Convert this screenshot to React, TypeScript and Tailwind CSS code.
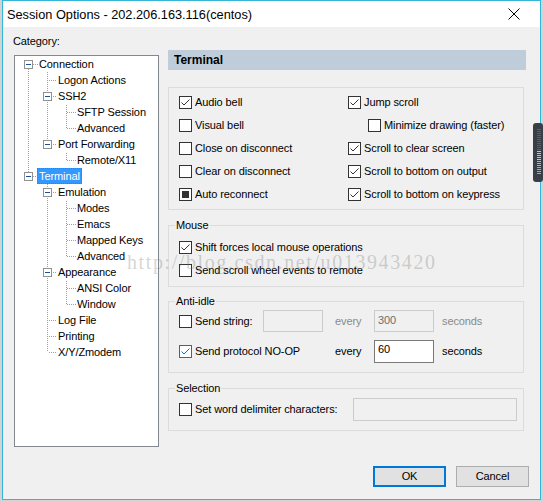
import React from "react";

type Node = { level: number; label: string; exp?: boolean; selected?: boolean };

const tree: Node[] = [
  { level: 0, label: "Connection", exp: true },
  { level: 1, label: "Logon Actions" },
  { level: 1, label: "SSH2", exp: true },
  { level: 2, label: "SFTP Session" },
  { level: 2, label: "Advanced" },
  { level: 1, label: "Port Forwarding", exp: true },
  { level: 2, label: "Remote/X11" },
  { level: 0, label: "Terminal", exp: true, selected: true },
  { level: 1, label: "Emulation", exp: true },
  { level: 2, label: "Modes" },
  { level: 2, label: "Emacs" },
  { level: 2, label: "Mapped Keys" },
  { level: 2, label: "Advanced" },
  { level: 1, label: "Appearance", exp: true },
  { level: 2, label: "ANSI Color" },
  { level: 2, label: "Window" },
  { level: 1, label: "Log File" },
  { level: 1, label: "Printing" },
  { level: 1, label: "X/Y/Zmodem" },
];

const hasNext = (i: number) => {
  const L = tree[i].level;
  for (let j = i + 1; j < tree.length; j++) {
    if (tree[j].level < L) return false;
    if (tree[j].level === L) return true;
  }
  return false;
};

const ancestorAt = (i: number, A: number) => {
  for (let j = i - 1; j >= 0; j--) if (tree[j].level === A) return j;
  return -1;
};

// dotted connector lines + expander boxes of the tree view
const TreeLines = () => {
  const dots: string[] = [];
  const vert = (x: number, y1: number, y2: number) => {
    for (let y = y1; y < y2; y++) if ((x + y) % 2 === 0) dots.push(`M${x} ${y}h1v1h-1z`);
  };
  const horiz = (y: number, x1: number, x2: number) => {
    for (let x = x1; x < x2; x++) if ((x + y) % 2 === 0) dots.push(`M${x} ${y}h1v1h-1z`);
  };
  const boxes: React.ReactElement[] = [];
  tree.forEach((n, i) => {
    const xc = 13 + 19 * n.level;
    const top = 16 * i;
    const yc = top + 8;
    if (i > 0) vert(xc, top, yc);
    if (hasNext(i)) vert(xc, yc, top + 16);
    for (let A = 0; A < n.level; A++) {
      const j = ancestorAt(i, A);
      if (j >= 0 && hasNext(j)) vert(13 + 19 * A, top, top + 16);
    }
    horiz(yc, n.exp ? xc + 5 : xc + 1, xc + 10);
    if (n.exp)
      boxes.push(
        <g key={i}>
          <rect x={xc - 3.5} y={yc - 3.5} width={8} height={8} fill="#ffffff" stroke="#919191" />
          <rect x={xc - 2} y={yc} width={5} height={1} fill="#1c4e9c" />
        </g>
      );
  });
  return (
    <svg className="absolute left-0 top-0" width="143" height="390" shapeRendering="crispEdges">
      <path d={dots.join("")} fill="#a0a0a0" />
      {boxes}
    </svg>
  );
};

const Check = ({ state, blue }: { state: "on" | "off" | "mixed"; blue?: boolean }) => (
  <span
    className={
      blue
        ? "relative flex w-[13px] h-[13px] shrink-0 items-center justify-center border border-[#0078d7] bg-white"
        : "relative flex w-[13px] h-[13px] shrink-0 items-center justify-center border border-[#333333] bg-white"
    }
  >
    {state === "on" && (
      <svg width="11" height="11" viewBox="0 0 11 11" className="block">
        <path d="M1.5 5.5 L4 8 L9.5 2.5" fill="none" stroke={blue ? "#0078d7" : "#333333"} strokeWidth="1" />
      </svg>
    )}
    {state === "mixed" && <span className="w-[7px] h-[7px] bg-[#333333]" />}
  </span>
);

const Option = ({
  label,
  state = "off",
  blue,
  className = "",
}: {
  label: string;
  state?: "on" | "off" | "mixed";
  blue?: boolean;
  className?: string;
}) => (
  <div className={`flex items-center gap-[3px] whitespace-nowrap ${className}`}>
    <Check state={state} blue={blue} />
    <span>{label}</span>
  </div>
);

const Group = ({ title, children }: { title: string; children: React.ReactNode }) => (
  <fieldset className="w-[356px] border border-[#dcdcdc] p-0 m-0">
    <legend className="ml-[6px] px-[1px] leading-[16px]">{title}</legend>
    {children}
  </fieldset>
);

export default function App() {
  return (
    <div className="relative w-[543px] h-[502px] overflow-hidden bg-[#d3d3d3] font-['Liberation_Sans',Arial,sans-serif] text-[11px] leading-[15px] tracking-[-0.1px] text-black">
      <div className="ml-[2px] w-[539px] h-[500px] border border-[#35b5d8] bg-[#f0f0f0] flex flex-col">
        {/* title bar */}
        <div className="h-[26px] shrink-0 bg-white flex items-center pl-[4px] pr-[20px]">
          <span className="text-[12.75px] tracking-normal">Session Options - 202.206.163.116(centos)</span>
          <svg className="ml-auto" width="12" height="12" viewBox="0 0 12 12">
            <path d="M0.5 0.5 L11.5 11.5 M11.5 0.5 L0.5 11.5" stroke="#000000" strokeWidth="1" />
          </svg>
        </div>

        <div className="flex-1 flex flex-col">
          <div className="flex items-start gap-[9px] pl-[11px]">
            {/* category tree */}
            <div className="w-[145px] pt-[6px]">
              <div className="ml-[-1px] leading-[16px]">Category:</div>
              <div className="relative mt-[6px] h-[392px] border border-[#828790] bg-white">
                <TreeLines />
                <div className="relative">
                  {tree.map((n, i) => (
                    <div key={i} className="h-[16px] flex items-center">
                      <span
                        className={
                          n.selected
                            ? "h-[16px] leading-[14px] px-[1px] border border-dotted border-[#b36b00] bg-[#3399ff] text-white"
                            : "h-[16px] leading-[14px] px-[1px] border border-transparent"
                        }
                        style={{ marginLeft: 22 + 19 * n.level }}
                      >
                        {n.label}
                      </span>
                    </div>
                  ))}
                </div>
              </div>
            </div>

            {/* options panel */}
            <div className="w-[358px] pt-[23px]">
              <div className="h-[20px] bg-[#bfcddb] pl-[6px] flex items-center font-bold text-[12px] tracking-normal">Terminal</div>

              <div className="mt-[17px] w-[356px] h-[123px] border border-[#dcdcdc] pl-[10px] pt-[3px] grid grid-cols-[169px_1fr]">
                <div className="flex flex-col">
                  <Option className="h-[23px]" label="Audio bell" state="on" />
                  <Option className="h-[23px]" label="Visual bell" />
                  <Option className="h-[23px]" label="Close on disconnect" />
                  <Option className="h-[23px]" label="Clear on disconnect" />
                  <Option className="h-[23px]" label="Auto reconnect" state="mixed" />
                </div>
                <div className="flex flex-col">
                  <Option className="h-[23px]" label="Jump scroll" state="on" />
                  <Option className="h-[23px] pl-[20px]" label="Minimize drawing (faster)" />
                  <Option className="h-[23px]" label="Scroll to clear screen" state="on" />
                  <Option className="h-[23px]" label="Scroll to bottom on output" state="on" />
                  <Option className="h-[23px]" label="Scroll to bottom on keypress" state="on" />
                </div>
              </div>

              <div className="mt-[7px]">
                <Group title="Mouse">
                  <div className="pl-[10px] pt-[3px] pb-[4px]">
                    <Option className="h-[23px]" label="Shift forces local mouse operations" state="on" />
                    <Option className="h-[23px]" label="Send scroll wheel events to remote" />
                  </div>
                </Group>
              </div>

              <div className="mt-[6px]">
                <Group title="Anti-idle">
                  <div className="pl-[10px] pb-[9px]">
                    <div className="h-[24px] flex items-center">
                      <Option className="w-[84px]" label="Send string:" />
                      <div className="w-[60px] h-[22px] border border-[#cccccc] bg-[#f0f0f0]" />
                      <span className="ml-[12px] w-[39px] text-[#8a8a8a]">every</span>
                      <div className="w-[60px] h-[22px] border border-[#cccccc] bg-[#f0f0f0] pl-[3px] pt-[2px] text-[#6d6d6d]">300</div>
                      <span className="ml-[8px] text-[#8a8a8a]">seconds</span>
                    </div>
                    <div className="mt-[6px] h-[24px] flex items-center">
                      <Option className="w-[156px]" label="Send protocol NO-OP" state="on" blue />
                      <span className="w-[39px]">every</span>
                      <div className="w-[60px] h-[23px] border border-[#7a7a7a] bg-white pl-[3px] pt-[1px]">60</div>
                      <span className="ml-[8px]">seconds</span>
                    </div>
                  </div>
                </Group>
              </div>

              <div className="mt-[7px]">
                <Group title="Selection">
                  <div className="pl-[10px] pt-[1px] pb-[9px]">
                    <div className="h-[24px] flex items-center">
                      <Option className="w-[174px]" label="Set word delimiter characters:" />
                      <div className="w-[164px] h-[23px] border border-[#cccccc] bg-[#f0f0f0]" />
                    </div>
                  </div>
                </Group>
              </div>
            </div>
          </div>

          {/* dialog buttons */}
          <div className="mt-[19px] flex justify-end gap-[10px] pr-[11px]">
            <button className="w-[73px] h-[21px] border-2 border-[#0078d7] bg-[#e1e1e1] leading-[17px]">OK</button>
            <button className="w-[73px] h-[21px] border border-[#adadad] bg-[#e1e1e1] leading-[19px]">Cancel</button>
          </div>
        </div>
      </div>

      {/* blog watermark over the dialog */}
      <div className="pointer-events-none absolute left-[127px] top-[250px] whitespace-nowrap font-['Liberation_Serif',serif] text-[20px] leading-[24px] tracking-[1.6px] text-[rgba(110,110,110,0.3)]">
        http://blog.csdn.net/u013943420
      </div>

      {/* desktop level meter peeking over the edge */}
      <svg className="absolute left-[533px] top-[123px]" width="10" height="59" viewBox="0 0 10 59">
        <rect x="0" y="0" width="10" height="59" rx="3" fill="#3a3f47" />
        {Array.from({ length: 23 }).map((_, k) => {
          const y = 6 + k * 2;
          const c = y < 27 ? "#5a5f66" : y < 38 ? "#d8d23c" : y < 44 ? "#8fd84a" : "#3fd6c0";
          return <rect key={k} x="4" y={y} width="4" height="1" fill={c} />;
        })}
      </svg>
    </div>
  );
}
